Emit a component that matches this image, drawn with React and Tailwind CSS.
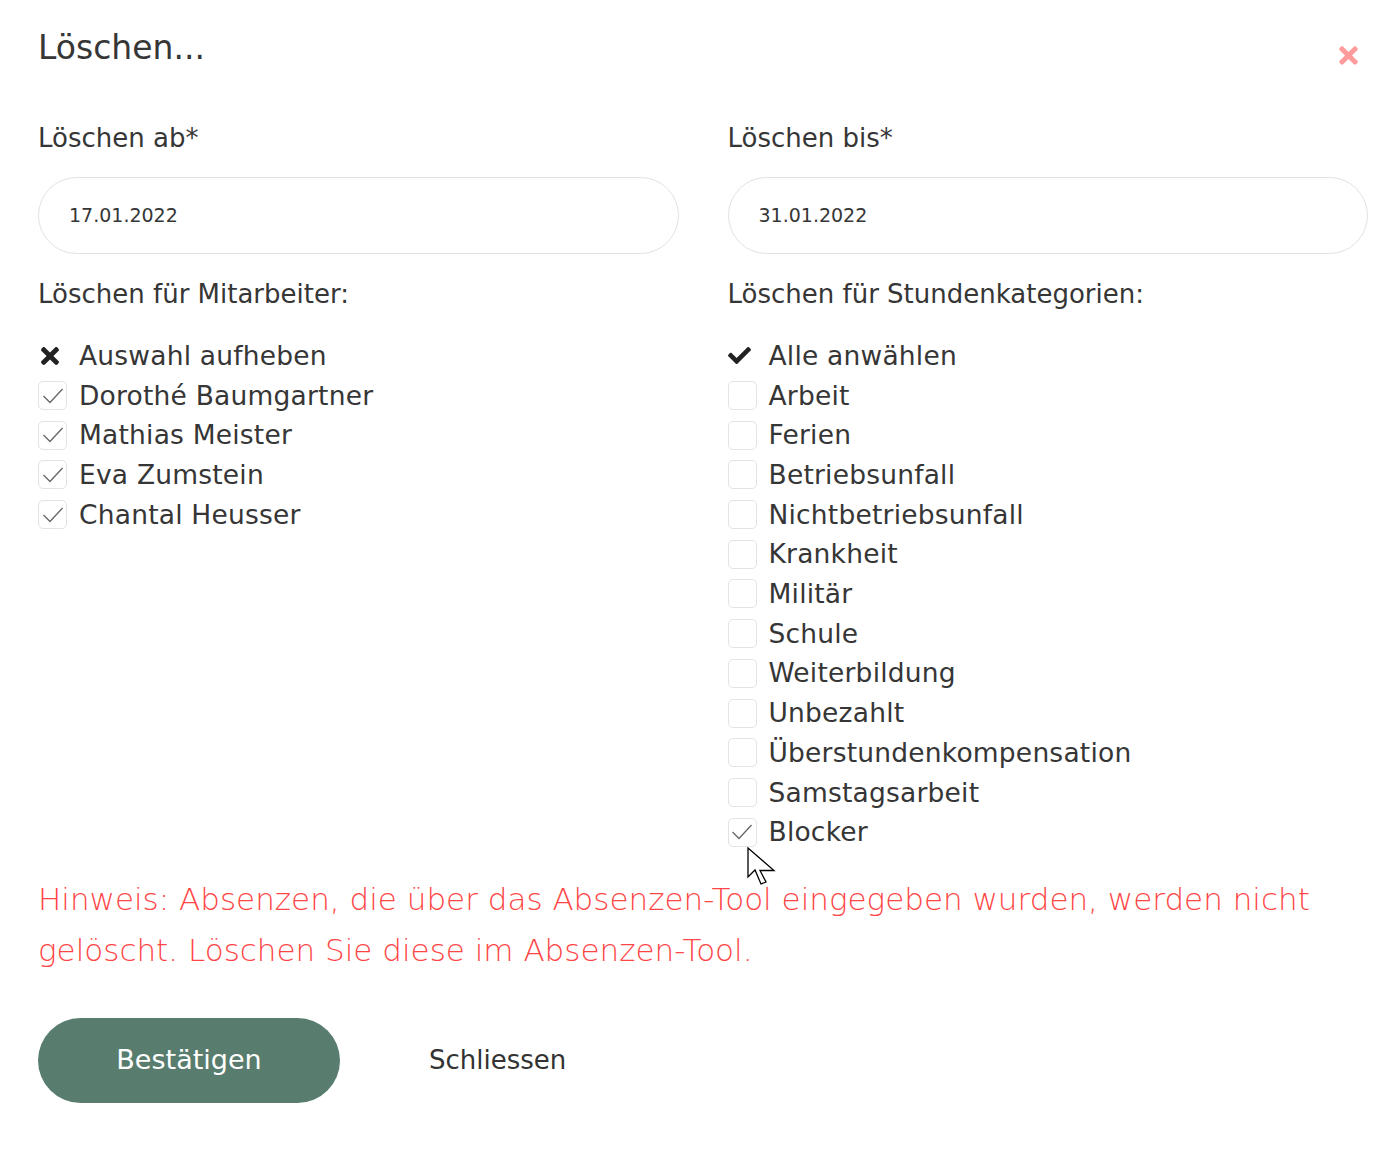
import React from "react";
import { FaTimes, FaCheck } from "react-icons/fa";

const employees = ["Dorothé Baumgartner", "Mathias Meister", "Eva Zumstein", "Chantal Heusser"];
const categories = [
  ["Arbeit", false],
  ["Ferien", false],
  ["Betriebsunfall", false],
  ["Nichtbetriebsunfall", false],
  ["Krankheit", false],
  ["Militär", false],
  ["Schule", false],
  ["Weiterbildung", false],
  ["Unbezahlt", false],
  ["Überstundenkompensation", false],
  ["Samstagsarbeit", false],
  ["Blocker", true],
];

function Box({ checked }) {
  return (
    <span className="w-[29px] h-[29px] rounded-[5px] border border-[#e3e3e3] bg-white flex items-center justify-center shrink-0">
      {checked && (
        <svg width="24" height="20" viewBox="0 0 24 20" fill="none">
          <path d="M2.5 10 L9 16.5 L21.5 3" stroke="#666" strokeWidth="1.3" />
        </svg>
      )}
    </span>
  );
}

function Row({ children, icon }) {
  return (
    <div className="h-[39.7px] flex items-center">
      <span className="w-[41px] flex items-center">{icon}</span>
      <span className="text-[26.5px] tracking-[0.2px]">{children}</span>
    </div>
  );
}

export default function App() {
  return (
    <div className="w-[1391px] min-h-[1155px] bg-white text-[#363636] font-['DejaVu_Sans',sans-serif] relative">
      <div className="pl-[38px] pr-[23px] pt-[27px]">
        <div className="flex justify-between items-start">
          <h1 className="text-[33px] leading-[42px] font-normal">Löschen...</h1>
          <button className="mt-[15px] mr-[6px] text-[#ff9b9b]">
            <FaTimes size={27} />
          </button>
        </div>

        <div className="grid grid-cols-2 gap-x-[49px] mt-[54px]">
          <div>
            <div className="text-[26px] leading-[30px]">Löschen ab*</div>
            <div className="mt-[24px] h-[77px] rounded-full border border-[#e2e2e2] flex items-center pl-[30px] text-[19px]">
              17.01.2022
            </div>
            <div className="mt-[25px] text-[26px] leading-[30px]">Löschen für Mitarbeiter:</div>
            <div className="mt-[27px]">
              <Row icon={<FaTimes size={26} className="text-[#222] -ml-[1px]" />}>Auswahl aufheben</Row>
              {employees.map((e) => (
                <Row key={e} icon={<Box checked />}>{e}</Row>
              ))}
            </div>
          </div>
          <div>
            <div className="text-[26px] leading-[30px]">Löschen bis*</div>
            <div className="mt-[24px] h-[77px] rounded-full border border-[#e2e2e2] flex items-center pl-[30px] text-[19px]">
              31.01.2022
            </div>
            <div className="mt-[25px] text-[26px] leading-[30px]">Löschen für Stundenkategorien:</div>
            <div className="mt-[27px]">
              <Row icon={<FaCheck size={23} className="text-[#222]" />}>Alle anwählen</Row>
              {categories.map(([c, ch]) => (
                <Row key={c} icon={<Box checked={ch} />}>{c}</Row>
              ))}
            </div>
          </div>
        </div>

        <p className="mt-[22px] text-[31px] leading-[51px] font-extralight text-[#ff4646] pr-[40px]">
          Hinweis: Absenzen, die über das Absenzen-Tool eingegeben wurden, werden nicht gelöscht. Löschen Sie diese im Absenzen-Tool.
        </p>

        <div className="mt-[42px] flex items-center">
          <button className="w-[302px] h-[85px] rounded-full bg-[#587d6f] text-white text-[27px]">Bestätigen</button>
          <button className="ml-[89px] text-[26px] text-[#333]">Schliessen</button>
        </div>
      </div>

      <svg className="absolute left-[747px] top-[847px]" width="30" height="40" viewBox="0 0 30 40">
        <path d="M1 1 L1 30 L8 23 L14 37 L19 35 L13 23.5 L27 23.5 Z" fill="white" stroke="black" strokeWidth="1.3" strokeLinejoin="miter" />
      </svg>
    </div>
  );
}
